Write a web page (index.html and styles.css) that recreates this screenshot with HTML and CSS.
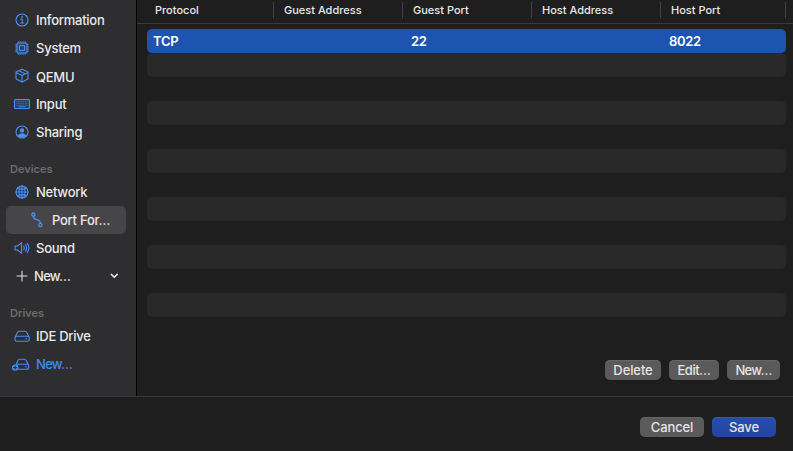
FILE: index.html
```html
<!DOCTYPE html>
<html lang="en">
<head>
<meta charset="utf-8">
<title>Port Forward</title>
<link rel="stylesheet" href="styles.css">
</head>
<body>
<div class="window">
  <div class="content">
    <nav class="sidebar">
      <a class="item"><svg class="icon" viewBox="0 0 20 16"><circle cx="10" cy="8" r="6"/><path d="M8.7 7h1.5v4M8.4 11h3.4"/><circle class="fill" cx="10" cy="4.9" r=".9"/></svg><span>Information</span></a>
      <a class="item"><svg class="icon" viewBox="0 0 20 16"><path d="M6.5 1.5v13M8.3 1.5v13M10 1.5v13M11.8 1.5v13M13.5 1.5v13M3.5 4.5h13M3.5 6.3h13M3.5 8h13M3.5 9.8h13M3.5 11.5h13" stroke-width=".7"/><rect class="chip" x="5" y="3" width="10" height="10" rx="1.3"/><rect x="7.5" y="5.5" width="5" height="5" rx=".5"/></svg><span>System</span></a>
      <a class="item qemu"><svg class="icon" viewBox="0 0 20 16"><path d="M10 1.2l6 2.9v6.8l-6 3.2-6-3.2V4.1zM4 4.4l6 3 6-3M10 7.4V14M7 2.8l6 3"/></svg><span>QEMU</span></a>
      <a class="item"><svg class="icon" viewBox="0 0 20 16"><rect class="keys" x="2.5" y="3.5" width="15" height="9" rx="1"/><path d="M4.3 5.5h11.6M4.3 7.4h11.6M4.3 9.2h11.6" stroke-width=".9" stroke-linecap="butt" stroke-dasharray="1.1 .6" opacity=".55"/><path d="M7 10.7h6" stroke-width=".9"/></svg><span>Input</span></a>
      <a class="item"><svg class="icon" viewBox="0 0 20 16"><circle cx="10" cy="8" r="6"/><circle class="fill" cx="10" cy="6.4" r="2.2"/><path class="fill" d="M5.7 11.9c.7-1.8 2.2-2.6 4.3-2.6s3.6.8 4.3 2.6C13.2 13.1 11.7 13.6 10 13.6s-3.2-.5-4.3-1.7z"/></svg><span>Sharing</span></a>

      <h2>Devices</h2>
      <a class="item"><svg class="icon" viewBox="0 0 20 16"><circle cx="10" cy="8" r="6"/><ellipse cx="10" cy="8" rx="3" ry="6"/><path d="M10 2v12M4 8h12M5.5 4.3q4.5 2.2 9 0M5.5 11.7q4.5-2.2 9 0"/></svg><span>Network</span></a>
      <a class="item child selected"><svg class="icon" viewBox="0 0 20 16"><g stroke-width="1.3"><circle cx="6.4" cy="2.6" r="1.6"/><circle cx="13.4" cy="13" r="1.6"/><path d="M6.4 4.2c0 2.5.8 3 3.2 3.5s3.8 1.2 3.8 3.7"/></g></svg><span>Port For…</span></a>
      <a class="item"><svg class="icon" viewBox="0 0 20 16"><path d="M3 6h2.6l4-3.3v10.6L5.6 10H3zM11.7 6q1.3 2 0 4M13.5 4.7q2.2 3.3 0 6.6M15.3 3.4q3 4.6 0 9.2"/></svg><span>Sound</span></a>
      <a class="item"><svg class="icon plain" viewBox="0 0 20 16"><path d="M5 8h10M10 3v10"/></svg><span class="dots">New…</span><svg class="chevron" viewBox="0 0 10 8"><path d="M2.3 2.3l3 3 3-3"/></svg></a>

      <h2>Drives</h2>
      <a class="item"><svg class="icon" viewBox="0 0 20 16"><path d="M3.3 8.7l2.2-4.2q.6-1.2 1.9-1.2h5.4q1.3 0 1.9 1.2l2.2 4.2"/><rect x="3" y="8.2" width="14.2" height="5" rx="1.8"/><path d="M13.8 10.7h1"/></svg><span>IDE Drive</span></a>
      <a class="item create"><svg class="icon" viewBox="0 0 20 16"><path d="M4.3 8.2l1.6-3.7q.6-1.2 1.9-1.2h4.6q1.3 0 1.9 1.2l2 3.9M5.5 8.2h9.2q2 0 2 1.8v1.2q0 2-2 2H6.5M13.3 10.7h1"/><circle class="fill" cx="3.2" cy="11.6" r="3.2"/><path class="cut" d="M1.6 11.6h3.2M3.2 10v3.2"/></svg><span class="dots">New…</span></a>
    </nav>
    <main>
      <div class="thead"><div>Protocol</div><div>Guest Address</div><div>Guest Port</div><div>Host Address</div><div>Host Port</div></div>
      <div class="rows">
        <div class="row active"><span>TCP</span><span></span><span>22</span><span></span><span>8022</span></div>
        <div class="row"></div><div class="row"></div><div class="row"></div><div class="row"></div><div class="row"></div><div class="row"></div><div class="row"></div><div class="row"></div><div class="row"></div><div class="row"></div><div class="row"></div>
      </div>
      <div class="actions"><button class="b-delete">Delete</button><button class="b-edit">Edit…</button><button class="b-new">New…</button></div>
    </main>
  </div>
  <footer><button>Cancel</button><button class="primary">Save</button></footer>
</div>
</body>
</html>
```
FILE: styles.css
```css
* { box-sizing: border-box; }
body { margin: 0; background: #1e1e1e; color: #e9e9e9; font: 500 13px/16px Inter, "Liberation Sans", sans-serif; overflow: hidden; }
.window { width: 793px; height: 451px; display: flex; flex-direction: column; }
.content { height: 396px; display: flex; }
.sidebar { width: 137px; border-right: 1px solid #000; background: #2e2e30; padding: 6px 10px 0 6px; }
.item { display: flex; align-items: center; height: 28px; padding-left: 6px; border-radius: 5px; white-space: nowrap; letter-spacing: -.25px; }
.icon { width: 20px; height: 16px; margin-right: 4px; flex: none; fill: none; stroke: #4a8ff5; stroke-width: 1.1; stroke-linecap: round; stroke-linejoin: round; overflow: visible; }
.icon .fill { fill: #4a8ff5; stroke: none; }
.icon .chip { fill: #29436b; }
.icon .keys { fill: #2b4063; }
.icon .cut { stroke: #2e2e30; }
.icon.plain { stroke: #dfdfdf; margin-right: 2px; }
.dots { letter-spacing: -.7px; }
.qemu span { padding-top: 2px; }
.child { padding-left: 21px; }
.child .icon { margin-right: 5px; }
.selected { background: #464648; }
.create { color: #3b8df5; }
.chevron { width: 10px; height: 8px; margin-left: auto; margin-right: 7px; fill: none; stroke: #e9e9e9; stroke-width: 1.6; stroke-linecap: round; stroke-linejoin: round; }
h2 { margin: 0; height: 32px; padding: 15px 0 0 4px; font-size: 11px; line-height: 16px; font-weight: 600; color: #6c6c6e; }
main { width: 656px; }
.thead { height: 24px; display: grid; grid-template-columns: 137px 129px 129px 129px 125px; border-bottom: 1px solid #393939; padding-top: 2px; font-size: 11px; }
.thead div { height: 16px; border-right: 1px solid #414141; padding-left: 10px; }
.thead div:first-child { padding-left: 18px; }
.rows { padding: 5px 7px 0 10px; height: 336px; }
.row { height: 24px; border-radius: 5px; display: grid; grid-template-columns: 129px 129px 129px 129px 1fr; align-items: center; padding-left: 6px; }
.row:nth-child(even) { background: #292929; }
.row.active { background: #1d54b2; color: #fff; font-weight: 600; letter-spacing: -.3px; }
.actions { display: flex; justify-content: flex-end; gap: 8px; padding-right: 13px; }
button { height: 20px; border: 0; border-radius: 5px; padding: 0 0 1px; background: #5a5a5a; color: #e5e5e5; font: inherit; letter-spacing: -.1px; box-shadow: inset 0 1px #666; }
.b-delete { width: 56px; }
.b-edit { width: 50px; letter-spacing: -.5px; }
.b-new { width: 53px; letter-spacing: -.7px; }
footer { height: 55px; border-top: 1px solid #393939; display: flex; justify-content: flex-end; gap: 8px; padding: 20px 17px 0 0; }
footer button { width: 64px; }
.primary { background: linear-gradient(#284eae, #2243a0); box-shadow: inset 0 1px #3558b3; }
```
